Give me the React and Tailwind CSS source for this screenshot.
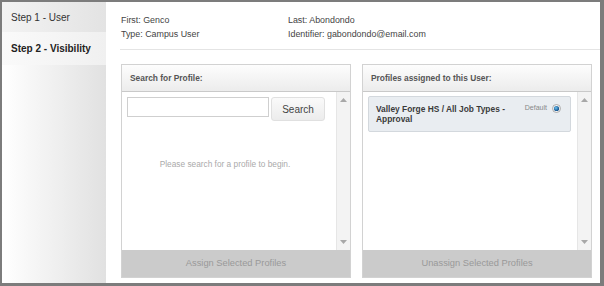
import React from 'react';

// small scrollbar arrow
function Arrow({ down }) {
  return (
    <svg width="7" height="4" viewBox="0 0 7 4" className="block">
      {down ? <path d="M0 0h7L3.5 4z" fill="#a8a8a8" /> : <path d="M0 4h7L3.5 0z" fill="#a8a8a8" />}
    </svg>
  );
}

function Scrollbar() {
  return (
    <div className="w-[14px] bg-[#f3f3f3] border-l border-[#e6e6e6] flex flex-col items-center justify-between py-[6px]">
      <Arrow />
      <Arrow down />
    </div>
  );
}

function Panel({ title, footer, children }) {
  return (
    <div className="w-[230px] h-[214px] flex flex-col border border-[#d2d2d2] bg-white">
      <div className="h-[27px] shrink-0 flex items-center px-[8px] bg-gradient-to-b from-[#fdfdfd] to-[#ececec] border-b border-[#c9c9c9] text-[8.4px] font-bold text-[#555]">
        {title}
      </div>
      <div className="flex flex-1 min-h-0">
        <div className="flex-1 min-w-0">{children}</div>
        <Scrollbar />
      </div>
      <div className="h-[27px] shrink-0 flex items-center justify-center bg-[#cbcbcb] text-[9.3px] text-[#999]">
        {footer}
      </div>
    </div>
  );
}

export default function App() {
  return (
    <div className="w-[604px] h-[286px] border-t-2 border-l-2 border-r-4 border-b-[3px] border-[#7c7c7c] bg-white flex font-['Liberation_Sans',Arial,sans-serif] text-[#333]">
      {/* Sidebar */}
      <div className="w-[104px] flex flex-col">
        <div className="h-[30px] shrink-0 flex items-center pl-[9px] bg-gradient-to-r from-[#f3f3f3] to-[#e3e3e3] text-[10px] text-[#333]">
          Step 1 - User
        </div>
        <div className="h-[33px] shrink-0 flex items-center pl-[9px] bg-gradient-to-r from-[#fafafa] to-[#f0f0f0] text-[10px] font-bold text-[#222]">
          Step 2 - Visibility
        </div>
        <div className="flex-1 bg-gradient-to-r from-[#ffffff] to-[#e1e1e1]" />
      </div>

      {/* Main */}
      <div className="flex-1 flex flex-col pl-[15px]">
        <div className="flex pt-[11px] pb-[8px] text-[8.9px] leading-[14px] text-[#444]">
          <div className="w-[167px]">
            <div>First: Genco</div>
            <div>Type: Campus User</div>
          </div>
          <div>
            <div>Last: Abondondo</div>
            <div>Identifier: gabondondo@email.com</div>
          </div>
        </div>
        <div className="h-px bg-[#e4e4e4] -ml-px" />

        <div className="flex gap-[11px] pt-[14px]">
          <Panel title="Search for Profile:" footer="Assign Selected Profiles">
            <div className="flex items-start gap-[2px] pl-[5px] pt-[5px]">
              <input
                type="text"
                className="w-[142px] h-[20px] border border-[#cfcfcf] bg-white outline-none px-1 text-[9px]"
              />
              <button
                type="button"
                className="w-[54px] h-[24px] rounded-[3px] border border-[#e0e0e0] bg-gradient-to-b from-[#fafafa] to-[#ececec] text-[10px] text-[#444]"
              >
                Search
              </button>
            </div>
            <p className="text-center text-[8.3px] text-[#aaa] mt-[37px] pr-[8px]">
              Please search for a profile to begin.
            </p>
          </Panel>

          <Panel title="Profiles assigned to this User:" footer="Unassign Selected Profiles">
            <div className="pl-[5px] pt-[4px] pr-[6px]">
              <div className="h-[36px] flex justify-between rounded-[2px] border border-[#d3d8dd] bg-[#e9edf1] pl-[7px] pr-[9px] pt-[7px]">
                <div className="text-[8.4px] font-bold leading-[10px] text-[#3a3a3a] w-[140px]">
                  Valley Forge HS / All Job Types - Approval
                </div>
                <div className="flex items-start gap-[5px]">
                  <span className="text-[7px] text-[#888] leading-[8px]">Default</span>
                  <svg width="9" height="9" viewBox="0 0 9 9" className="block -mt-[0.5px]">
                    <defs>
                      <radialGradient id="rb" cx="0.4" cy="0.4" r="0.6">
                        <stop offset="0" stopColor="#6fc3f0" />
                        <stop offset="1" stopColor="#0d4d8a" />
                      </radialGradient>
                    </defs>
                    <circle cx="4.5" cy="4.5" r="4" fill="#f4f4f4" stroke="#9a9a9a" strokeWidth="0.8" />
                    <circle cx="4.5" cy="4.5" r="2.6" fill="url(#rb)" />
                  </svg>
                </div>
              </div>
            </div>
          </Panel>
        </div>
      </div>
    </div>
  );
}
